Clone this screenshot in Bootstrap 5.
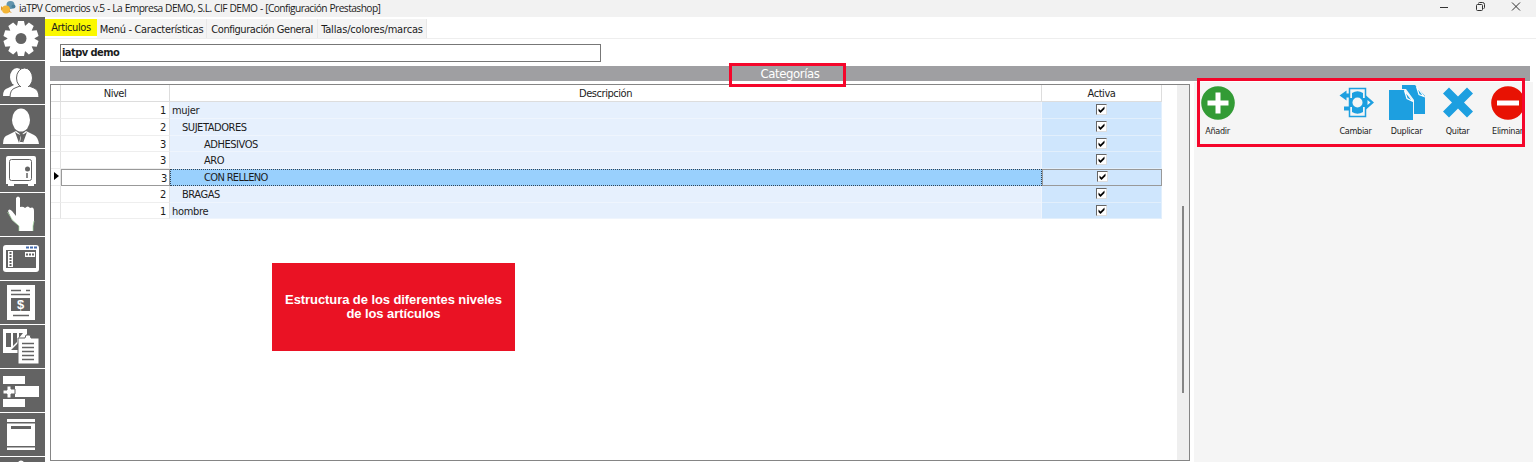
<!DOCTYPE html>
<html lang="es">
<head>
<meta charset="utf-8">
<title>iaTPV Comercios</title>
<link href="https://cdn.jsdelivr.net/npm/bootstrap@5.3.0/dist/css/bootstrap.min.css" rel="stylesheet">
<style>
body{width:1536px;height:462px;overflow:hidden;background:#fff;color:#1c1c1c;font:11px/16px "DejaVu Sans Condensed","DejaVu Sans",sans-serif;font-stretch:condensed}
svg{display:block}
.titlebar{height:17px;background:#f2f2f2;font:10.2px/16px "Open Sans",sans-serif;padding-left:1px}
.titlebar .caption{margin-left:3px;white-space:nowrap;letter-spacing:-.55px;word-spacing:.4px}
.winbtns{margin-left:auto;gap:22px;padding-right:13px}
.workspace{height:445px}
.tools{width:45px;height:445px;overflow:hidden;flex:none;background:#fff}
.tool{height:43px;margin-bottom:1px;background:#636363;flex:none}
.tool svg{width:45px;height:43px}
.tabs{height:22px;padding-top:2px;border-bottom:1px solid #eee}
.tab-item{height:19px;line-height:21px;background:#f4f4f4;border-right:1px solid #e8e8e8;text-align:center;white-space:nowrap;letter-spacing:-.33px}
.tab-item.current{background:#fbf800;height:17px;line-height:17px;border:0;letter-spacing:-.4px}
.tab-item.wide{letter-spacing:-.45px}
.tab-item.last{letter-spacing:-.17px}
.company{width:541px;height:18px;margin:5px 0 0 15px;border:1px solid #777;font-weight:bold;line-height:16px;padding-left:1px;letter-spacing:-.55px}
.heading{width:1480px;height:15px;margin:4px 0 0 5px;background:#9f9fa2;color:#fff;font-size:13px;line-height:16px;letter-spacing:-.4px}
.frame-red{position:absolute;border:3px solid #f5062b}
.grid-box{width:1140px;height:377px;margin:3px 0 0 5px;border:1px solid #858585;flex:none;background:#fff}
.data{width:1111px;display:grid;grid-template-columns:10px 109px 872px 120px;grid-template-rows:17px repeat(7,16.75px)}
.data>div{border-right:1px solid #e3e3e3;border-bottom:1px solid #eee;line-height:18px;white-space:pre;overflow:hidden;letter-spacing:-.3px}
.data .hd{text-align:center;border-color:#ddd;letter-spacing:-.45px}
.data .lv{text-align:right;padding-right:3px}
.data .ds{background:#e6f0fd;padding-left:2px;border-color:#eff5fd}
.data .ac{background:#cfe6fd;border-color:#e2effc}
.data .ds.l2{padding-left:12px;letter-spacing:-.45px}.data .ds.l3{padding-left:34px;letter-spacing:-.45px}
.data .lv.sel,.data .ac.sel{border:1px solid #999;line-height:17px}
.data .lv.sel{padding-right:2px}
.data .ds.sel{background:#99d0fd;border:1px dotted #345;padding-left:33px;line-height:16px;letter-spacing:-.65px}
.chk{width:11px;height:11px;margin-top:2px;background:#fff;border:1px solid #ddd;border-top-color:#666;border-left-color:#666}
.sel .chk{margin-top:1px}
.gutter{width:12px;background:#efefef;padding:121px 0 0 5px;margin-left:auto}
.thumb{width:2px;height:187px;background:#858585}
.side{width:339px;height:380px;margin:1px 0 0 4px;padding-top:3px;background:#f5f5f5}
.act{width:51px;flex:none;text-align:center;font-size:9px;line-height:12px;letter-spacing:-.3px;white-space:nowrap}
.act svg{width:36px;height:36px;margin:0 auto 4px}
.note{left:272px;top:263px;width:243px;height:88px;background:#ea1224;color:#fff;font:bold 13px/14px "Liberation Sans",sans-serif;letter-spacing:-.08px;position:absolute}
</style>
</head>
<body>
<header class="titlebar d-flex align-items-start">
  <svg width="15" height="15"><circle cx="9.500" cy="5" r="4" fill="#6295ae"/><circle cx="12.500" cy="6.500" r="2" fill="#477f9b"/><circle cx="5" cy="9.500" r="4" fill="#f3b536"/><path d="M2 8L0 6v5zM8 12l3 1-3-3z" fill="#df982a"/></svg>
  <div class="caption">iaTPV Comercios v.5 - La Empresa DEMO, S.L. CIF DEMO - [Configuración Prestashop]</div>
  <div class="winbtns d-flex">
    <svg width="14" height="14" fill="none" stroke="#333"><path d="M3 7.500h8"/></svg>
    <svg width="14" height="14" fill="none" stroke="#333"><rect x="3.500" y="4.500" width="6" height="6" rx="1"/><path d="M5.500 3.500q0-1 1-1h3q2 0 2 2v3q0 1-1 1"/></svg>
    <svg width="14" height="14" fill="none" stroke="#333"><path d="M3 2.500l8 8m0-8l-8 8"/></svg>
  </div>
</header>
<main class="workspace d-flex">
  <nav class="tools d-flex flex-column">
    <div class="tool"><svg viewBox="0 17 45 43"><g fill="#fff"><circle cx="21" cy="38.500" r="13.500"/><g id="teeth"><path id="tooth" d="M18 21h6l1 5h-8z"/><use href="#tooth" transform="rotate(36 21 38.500)"/><use href="#tooth" transform="rotate(72 21 38.500)"/><use href="#tooth" transform="rotate(108 21 38.500)"/><use href="#tooth" transform="rotate(144 21 38.500)"/></g><use href="#teeth" transform="rotate(180 21 38.500)"/></g><circle cx="21" cy="38.500" r="5.500" fill="#636363"/></svg></div>
    <div class="tool"><svg viewBox="0 61 45 43"><g fill="#fff"><ellipse cx="17" cy="77" rx="7" ry="9"/><path d="M3 96q0-7 5-8l6-3h9v11z"/><path d="M10 97.500q0-8 5-9.500l5-2v-3h9v3l5 2q5 2 5 9.500z" stroke="#636363"/><ellipse cx="24.500" cy="78" rx="8" ry="10" stroke="#636363"/><path d="M21 83h7v6h-7z"/></g></svg></div>
    <div class="tool"><svg viewBox="0 105 45 43"><g fill="#fff"><ellipse cx="21" cy="120" rx="9" ry="11.500"/><path d="M3 144q0-8 5-9l8-4 5 4 5-4 8 4q4 2 5 9z"/></g><path d="M15 132l4 11 2-8-3-1zm12 0l-4 11-2-8 3-1z" fill="#636363"/><path d="M20 134h3l-1 3 1 5h-3l1-5z" fill="#636363"/></svg></div>
    <div class="tool"><svg viewBox="0 149 45 43"><path d="M8 156h26q2 0 2 2v26h-2v2h-6v-2H14v2H8v-2H6v-26q0-2 2-2z" fill="#fff"/><rect x="9.500" y="159.500" width="22" height="21" rx="2" fill="none" stroke="#636363"/><circle cx="27.500" cy="169" r="2.500" fill="#636363"/><path d="M27 173v5" stroke="#636363" stroke-width="1.500"/></svg></div>
    <div class="tool"><svg viewBox="0 193 45 43"><path d="M16 198q2-3 4 0v9q3-1 5 1 3-3 5 0 4-2 4 3v10l-1 5v5H19v-5l-7-6-4-9q1-3 4 0l4 5z" fill="#fff"/><path d="M7.500 212l5 8 6.500 6v5m14 0v-5l1-5" fill="none" stroke="#a7dda4" stroke-width=".7"/></svg></div>
    <div class="tool"><svg viewBox="0 237 45 43"><rect x="3" y="245" width="36" height="27" rx="3" fill="#fff"/><path d="M6 250h30v18H6z" fill="#636363"/><path d="M26 247.500h11" stroke="#456cae" stroke-width="2" stroke-dasharray="3 1"/><path d="M8 251h5v16H8zM25 252h10v5H25z" fill="#fff"/><path d="M10.500 252v15M26 254.500h8" stroke="#636363" stroke-width="2" stroke-dasharray="2 1"/></svg></div>
    <div class="tool"><svg viewBox="0 281 45 43"><path d="M7 285h28v35H7z" fill="#fff"/><path d="M11 290.500h10m5 0h4M11 294.500h19M13 315.500h16" stroke="#636363" stroke-width="1.500"/><path d="M11 298h19v13H11z" fill="#636363"/><text x="20.500" y="308.800" text-anchor="middle" font-family="Liberation Sans" font-weight="bold" font-size="13" fill="#fff">$</text></svg></div>
    <div class="tool"><svg viewBox="0 325 45 43"><path d="M3 329h24v24H3z" fill="#fff"/><path d="M6 333h5v14H6zm7 0h4v9l-4 4zm6 0h4l-4 5zm-8 17l12-12v12z" fill="#636363"/><path d="M20 338h5l1-3h4l1 3h8v26H18v-26z" fill="#fff" stroke="#636363"/><path d="M22 343.500h12M22 347.500h12M22 351.500h12M22 355.500h12M22 359.500h12" stroke="#636363" stroke-width="1.500"/></svg></div>
    <div class="tool"><svg viewBox="0 369 45 43"><path d="M3 376h22v8H3zm12 10h24v11H15zM3 399h22v8H3z" fill="#fff"/><path d="M3 390h4v-4h4v3h4v5h-4v4H7v-4H3z" fill="#fff" stroke="#636363"/></svg></div>
    <div class="tool"><svg viewBox="0 413 45 43"><path d="M7 419h28v3H7zm0 4.500h28V446H7zm0 24h28v2.500H7z" fill="#fff"/><path d="M11 426h20v3H11z" fill="#636363"/></svg></div>
    <div class="tool"><svg viewBox="0 457 45 43"><circle cx="21" cy="463.500" r="3" fill="#fff"/></svg></div>
  </nav>
  <section class="flex-grow-1">
    <div class="tabs d-flex">
      <div class="tab-item current" style="width:52px">Articulos</div>
      <div class="tab-item" style="width:110px">Menú - Características</div>
      <div class="tab-item wide" style="width:111px">Configuración General</div>
      <div class="tab-item last" style="width:109px">Tallas/colores/marcas</div>
    </div>
    <div class="company">iatpv demo</div>
    <div class="heading text-center">Categorías</div>
    <div class="d-flex">
      <div class="grid-box d-flex">
        <div class="data" id="data"></div>
        <div class="gutter"><div class="thumb"></div></div>
      </div>
      <aside class="side d-flex align-items-start">
        <div class="act" style="margin-left:-2px"><svg viewBox="0 0 36 36"><circle cx="18" cy="18" r="16.800" fill="#329b35"/><path d="M15.500 7.500h5v8h8v5h-8v8h-5v-8h-8v-5h8z" fill="#fff"/></svg>Añadir</div>
        <div class="act" style="margin-left:87px"><svg viewBox="0 0 36 36"><g fill="#1d9fe0"><path d="M1.500 10.500l7-5v3h3v4h-3v3zM6 21.500h5.500v4H6z"/><path d="M14 8q5.500-3.500 11 0v5h2v9h-2v5q-5.500 3.500-11 0v-5h-2v-9h2z"/><path fill-rule="evenodd" d="M27.500 10l8.500 7.500-8.500 7.500zm2 5v5l3-2.500z"/></g><circle cx="19.500" cy="17.500" r="5" fill="#f5f5f5"/><path d="M11.500 3.500h16v28h-16z" fill="none" stroke="#1d9fe0" stroke-width="1.500"/></svg>Cambiar</div>
        <div class="act"><svg viewBox="0 0 36 36"><path d="M13 0h13l10 11v18H25V15L17 4h-4zM0 5h15l9 11v19H0z" fill="#1d9fe0"/><path d="M15.500 5.500l8.500 11-6-3zm12-4l7.500 10-5-2z" fill="#1d9fe0" stroke="#fff" stroke-width="1.200"/></svg>Duplicar</div>
        <div class="act"><svg viewBox="0 0 36 36"><path d="M9 2.500l9 9 9-9 6 6-9 9 9 9-6 6-9-9-9 9-6-6 9-9-9-9z" fill="#1d9fe0"/></svg>Quitar</div>
        <div class="act" style="margin-left:-1px"><svg viewBox="0 0 36 36"><circle cx="18" cy="18" r="16.800" fill="#e81203"/><path d="M7 15.500h22v5H7z" fill="#fff"/></svg>Eliminar</div>
      </aside>
    </div>
  </section>
</main>
<div class="frame-red" style="left:729px;top:63px;width:117px;height:24px"></div>
<div class="frame-red" style="left:1197px;top:78px;width:328px;height:69px"></div>
<div class="note d-flex align-items-center justify-content-center text-center">Estructura de los diferentes niveles<br>de los artículos</div>
<script>
const rows=[[1,'mujer'],[2,'SUJETADORES'],[3,'ADHESIVOS'],[3,'ARO'],[3,'CON RELLENO',1],[2,'BRAGAS'],[1,'hombre']];
document.getElementById('data').innerHTML='<div class="hd"></div><div class="hd">Nivel</div><div class="hd">Descripción</div><div class="hd">Activa</div>'+rows.map(([l,t,s])=>{
 const k=s?' sel':'';
 return `<div>${s?'<svg width="9" height="14"><path d="M3 3l5 4-5 4z" fill="#000"/></svg>':''}</div><div class="lv${k}">${l}</div><div class="ds l${l}${k}">${t}</div><div class="ac${k}"><svg class="chk mx-auto" viewBox="0 0 9 9"><path d="M1.500 3.500l2 2 4-4v2.500l-4 4-2-2z" fill="#000"/></svg></div>`}).join('');
</script>
<script src="https://cdn.jsdelivr.net/npm/bootstrap@5.3.0/dist/js/bootstrap.bundle.min.js"></script>
</body>
</html>
